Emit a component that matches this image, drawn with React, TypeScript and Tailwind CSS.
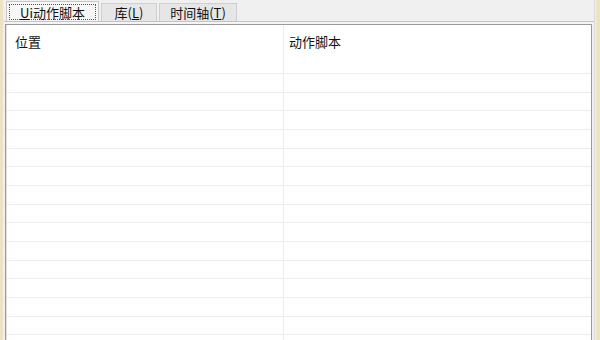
import React from "react";

export default function App() {
  const rows = Array.from({ length: 15 });
  return (
    <div
      className="w-[600px] h-[340px] overflow-hidden flex bg-[#f0f0f0] text-[#111]"
      style={{ fontFamily: '"Noto Sans CJK SC", "Noto Sans", sans-serif' }}
    >
      <div className="w-[3px] bg-[#ede2c6] shrink-0" />
      <div className="w-[1px] bg-[#f5efe0] shrink-0" />
      <div className="flex-1 flex flex-col min-w-0">
        <div className="h-[21px] flex items-end pl-[2px] gap-[2px] shrink-0">
          <div className="h-[20px] w-[93px] bg-[#f7f7f7] border border-[#c8c8c8] border-b-0 flex items-center justify-center px-[2px] pt-[1px]">
            <div className="w-full h-[16px] border border-dotted border-[#555] flex items-center justify-center text-[13px] leading-none">
              <span className="underline">U</span>i动作脚本
            </div>
          </div>
          <div className="h-[18px] w-[56px] bg-[#e6e6e6] border border-[#cfcfcf] border-b-0 flex items-center justify-center text-[13px] leading-none">
            库(<span className="underline">L</span>)
          </div>
          <div className="h-[18px] w-[78px] bg-[#e6e6e6] border border-[#cfcfcf] border-b-0 flex items-center justify-center text-[13px] leading-none">
            时间轴(<span className="underline">T</span>)
          </div>
        </div>
        <div className="h-[1px] bg-[#c4c4c4] shrink-0" />
        <div className="h-[2px] bg-[#f4f4f4] shrink-0" />
        <div className="flex-1 flex mr-[2px] ml-[1px] border-l border-t border-r border-[#9a9a9a] bg-white min-h-0">
          <div className="flex-1 flex flex-col border-l border-[#e2e2e2] min-w-0">
            <div className="h-[48px] flex shrink-0">
              <div className="w-[277px] pl-[8px] pt-[7px] text-[13px] border-r border-[#ececec]">位置</div>
              <div className="flex-1 pl-[5px] pt-[7px] text-[13px]">动作脚本</div>
            </div>
            {rows.map((_, i) => (
              <div key={i} className="h-[18.67px] flex shrink-0 border-t border-[#ececec]">
                <div className="w-[277px] border-r border-[#ececec]" />
                <div className="flex-1" />
              </div>
            ))}
          </div>
        </div>
      </div>
      <div className="w-[1px] bg-[#d8d8d8] shrink-0" />
      <div className="w-[1px] bg-[#f6f0e2] shrink-0" />
      <div className="w-[4px] bg-[#ede2c6] shrink-0" />
    </div>
  );
}
